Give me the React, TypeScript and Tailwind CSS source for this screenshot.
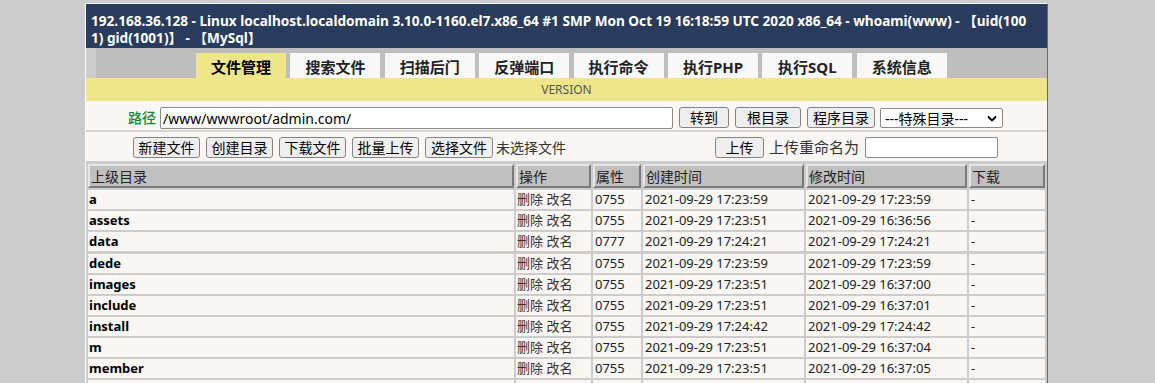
import React from 'react';

const rows = [
  { name: 'a', mode: '0755', ctime: '2021-09-29 17:23:59', mtime: '2021-09-29 17:23:59' },
  { name: 'assets', mode: '0755', ctime: '2021-09-29 17:23:51', mtime: '2021-09-29 16:36:56' },
  { name: 'data', mode: '0777', ctime: '2021-09-29 17:24:21', mtime: '2021-09-29 17:24:21' },
  { name: 'dede', mode: '0755', ctime: '2021-09-29 17:23:59', mtime: '2021-09-29 17:23:59' },
  { name: 'images', mode: '0755', ctime: '2021-09-29 17:23:51', mtime: '2021-09-29 16:37:00' },
  { name: 'include', mode: '0755', ctime: '2021-09-29 17:23:51', mtime: '2021-09-29 16:37:01' },
  { name: 'install', mode: '0755', ctime: '2021-09-29 17:24:42', mtime: '2021-09-29 17:24:42' },
  { name: 'm', mode: '0755', ctime: '2021-09-29 17:23:51', mtime: '2021-09-29 16:37:04' },
  { name: 'member', mode: '0755', ctime: '2021-09-29 17:23:51', mtime: '2021-09-29 16:37:05' },
  { name: 'plus', mode: '0755', ctime: '2021-09-29 17:23:51', mtime: '2021-09-29 16:37:06' },
];

const tabs = ['文件管理', '搜索文件', '扫描后门', '反弹端口', '执行命令', '执行PHP', '执行SQL', '系统信息'];

const cols = 'grid grid-cols-[426px_75px_48px_161px_161px_76px] gap-x-[2px]';

const Btn: React.FC<{ children: React.ReactNode; w: string }> = ({ children, w }) => (
  <button
    className={`${w} h-[21px] shrink-0 bg-[#efefef] border border-[#858585] rounded-[3px] text-[14px] leading-none text-black flex items-center justify-center`}
  >
    {children}
  </button>
);

const HeadCell: React.FC<{ children: React.ReactNode }> = ({ children }) => (
  <div className="h-[24px] bg-[#c0c0c0] border-2 border-t-[#e6e6e6] border-l-[#e6e6e6] border-r-[#7a7a7a] border-b-[#7a7a7a] flex items-center px-[1px] text-[14px] text-[#222]">
    {children}
  </div>
);

export default function App() {
  return (
    <div
      className="h-screen bg-[#cccccc] pt-[3px] overflow-hidden"
      style={{ fontFamily: '"Noto Sans", "Noto Sans CJK SC", sans-serif' }}
    >
      <div className="ml-[85px] w-[963px] border border-t-white border-l-white border-r-[#6b6b6b] border-b-[#6b6b6b] bg-[#cccccc]">
        {/* Header */}
        <div className="bg-[#293c5d] text-white font-bold text-[13.6px] leading-[17px] pl-[5px] pt-[8px] h-[44px]">
          <div className="whitespace-nowrap">
            192.168.36.128 - Linux localhost.localdomain 3.10.0-1160.el7.x86_64 #1 SMP Mon Oct 19 16:18:59 UTC 2020 x86_64 - whoami(www) - 【uid(100
          </div>
          <div className="whitespace-nowrap">1) gid(1001)】 - 【MySql】</div>
        </div>

        {/* Tabs */}
        <div className="h-[30px] bg-[#bebebe] border-l-[10px] border-[#cccccc] flex items-end gap-[4.4px] pl-[100px]">
          {tabs.map((t, i) => (
            <div
              key={t}
              className={`w-[90px] h-[25px] flex items-center justify-center pt-[3px] text-[15px] font-bold ${
                i === 0 ? 'bg-[#efe58a] text-black' : 'bg-[#f8f8f8] text-[#222]'
              }`}
            >
              {t}
            </div>
          ))}
        </div>

        {/* Version */}
        <div className="h-[23px] bg-[#efe58a] flex items-center justify-center text-[12px] text-[#555]">VERSION</div>

        {/* Path row */}
        <div className="h-[31px] bg-[#f9f6f3] flex items-start pt-[6px] gap-[6px] pl-[42px] border-b-2 border-[#d4d4d4]">
          <span className="text-[14px] leading-[22px] text-[#118a3c] font-medium -mr-[2px]">路径</span>
          <div className="w-[513px] h-[22px] shrink-0 bg-white border border-[#8a8a8a] rounded-[2px] flex items-center px-[2px] text-[14px] text-black">
            /www/wwwroot/admin.com/
          </div>
          <Btn w="w-[50px]">转到</Btn>
          <Btn w="w-[66px]">根目录</Btn>
          <Btn w="w-[68px]">程序目录</Btn>
          <div className="w-[123px] h-[20px] shrink-0 mt-[1px] -ml-[1px] bg-white border border-[#8a8a8a] rounded-[2px] flex items-center justify-between pl-[4px] pr-[5px] text-[14px] text-black">
            <span>---特殊目录---</span>
            <svg width="10" height="7" viewBox="0 0 10 7">
              <path d="M1 1.5 L5 5.5 L9 1.5" fill="none" stroke="#000" strokeWidth="1.8" />
            </svg>
          </div>
        </div>

        {/* Upload row */}
        <div className="h-[29px] bg-[#f9f6f3] flex items-center pt-[2px] gap-[6px] pl-[47px]">
          <Btn w="w-[67px]">新建文件</Btn>
          <Btn w="w-[67px]">创建目录</Btn>
          <Btn w="w-[67px]">下载文件</Btn>
          <Btn w="w-[67px]">批量上传</Btn>
          <div className="flex items-center gap-[3px]">
            <Btn w="w-[68px]">选择文件</Btn>
            <span className="text-[14px] text-[#333]">未选择文件</span>
          </div>
          <span className="w-[137px] shrink-0" />
          <Btn w="w-[49px]">上传</Btn>
          <span className="text-[15px] text-[#333] -ml-[1px]">上传重命名为</span>
          <div className="w-[133px] h-[21px] shrink-0 bg-white border border-[#8a8a8a] rounded-[2px]" />
        </div>

        {/* Table */}
        <div className="pt-[3px] pl-[2px] flex flex-col gap-y-[2.125px] bg-[#cccccc]">
          <div className={cols}>
            <HeadCell>上级目录</HeadCell>
            <HeadCell>操作</HeadCell>
            <HeadCell>属性</HeadCell>
            <HeadCell>创建时间</HeadCell>
            <HeadCell>修改时间</HeadCell>
            <HeadCell>下载</HeadCell>
          </div>
          {rows.map((r) => (
            <div key={r.name} className={`${cols} h-[19px] text-[13px] leading-[19px]`}>
              <div className="bg-[#f9f6f3] px-[1px] font-bold text-black">{r.name}</div>
              <div className="bg-[#f9f6f3] px-[1px] text-[#333]">删除 改名</div>
              <div className="bg-[#f9f6f3] px-[2px] text-[#222]">{r.mode}</div>
              <div className="bg-[#f9f6f3] px-[2px] text-[#222]">{r.ctime}</div>
              <div className="bg-[#f9f6f3] px-[2px] text-[#222]">{r.mtime}</div>
              <div className="bg-[#f9f6f3] px-[2px] text-[#222]">-</div>
            </div>
          ))}
        </div>
      </div>
    </div>
  );
}
